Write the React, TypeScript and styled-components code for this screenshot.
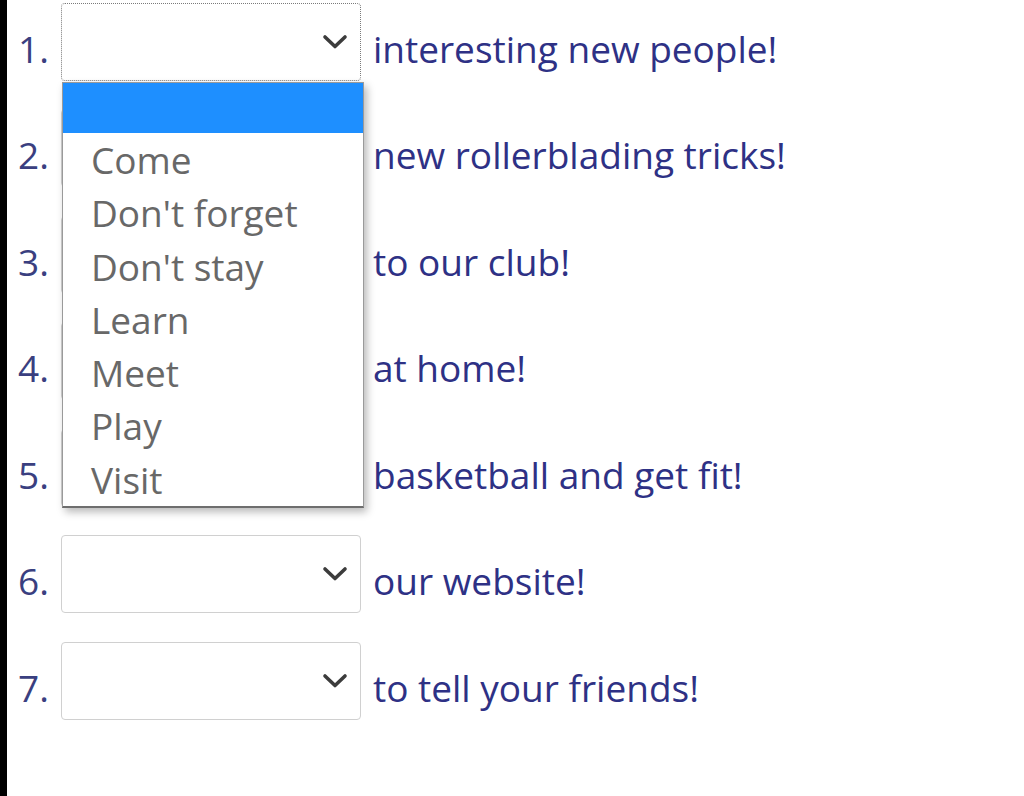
import { createGlobalStyle } from 'styled-components';
import styled from 'styled-components';

const GlobalStyle = createGlobalStyle`
  html, body {
    margin: 0;
    padding: 0;
    background: #ffffff;
  }
  body {
    font-family: 'Open Sans', 'Noto Sans', sans-serif;
  }
`;

const Page = styled.div`
  min-height: 796px;
  box-sizing: border-box;
  border-left: 7px solid #000;
  padding: 2.5px 0 0 11px;
`;

const List = styled.ol`
  list-style: none;
  margin: 0;
  padding: 0;
  display: flex;
  flex-direction: column;
  gap: 28.6px;
`;

const Row = styled.li`
  display: flex;
  align-items: center;
  height: 78px;
  position: relative;
`;

const Num = styled.span`
  width: 43px;
  font-size: 37px;
  color: #3a3f80;
  padding-top: 13px;
`;

const SelectBox = styled.div<{ $focused?: boolean }>`
  position: relative;
  box-sizing: border-box;
  width: 300px;
  height: 78px;
  background: #fff;
  border-radius: 4px;
  border: ${(p) => (p.$focused ? '1.5px dotted #7a7a7a' : '1.5px solid #d0d0d0')};
  display: flex;
  align-items: center;
  justify-content: flex-end;
  padding-right: 12px;
`;

const Label = styled.span`
  margin-left: 12px;
  font-size: 37px;
  color: #2e3185;
  padding-top: 13px;
  white-space: nowrap;
`;

const Dropdown = styled.ul`
  position: absolute;
  top: 79.5px;
  left: 44px;
  width: 300px;
  margin: 0;
  padding: 0;
  list-style: none;
  background: #fff;
  border: 1px solid #9a9a9a;
  border-bottom: 2px solid #6e6e6e;
  box-shadow: 3px 4px 8px rgba(0, 0, 0, 0.28);
  z-index: 5;
`;

const Option = styled.li<{ $active?: boolean }>`
  height: ${(p) => (p.$active ? '50px' : '53.3px')};
  line-height: 53.3px;
  padding-left: 28px;
  font-size: 37px;
  color: #686868;
  background: ${(p) => (p.$active ? '#1e8fff' : 'transparent')};
`;

function Chevron() {
  return (
    <svg width="26" height="16" viewBox="0 0 26 16">
      <polyline
        points="3,3 13,12.5 23,3"
        fill="none"
        stroke="#3c3c3c"
        strokeWidth="3.6"
        strokeLinecap="round"
        strokeLinejoin="round"
      />
    </svg>
  );
}

const rows = [
  'interesting new people!',
  'new rollerblading tricks!',
  'to our club!',
  'at home!',
  'basketball and get fit!',
  'our website!',
  'to tell your friends!',
];

const options = ['Come', "Don't forget", "Don't stay", 'Learn', 'Meet', 'Play', 'Visit'];

export default function App() {
  return (
    <>
      <GlobalStyle />
      <Page>
        <List>
          {rows.map((text, i) => (
            <Row key={text}>
              <Num>{i + 1}.</Num>
              <SelectBox $focused={i === 0}>
                <Chevron />
              </SelectBox>
              <Label>{text}</Label>
              {i === 0 && (
                <Dropdown>
                  <Option $active />
                  {options.map((o) => (
                    <Option key={o}>{o}</Option>
                  ))}
                </Dropdown>
              )}
            </Row>
          ))}
        </List>
      </Page>
    </>
  );
}
